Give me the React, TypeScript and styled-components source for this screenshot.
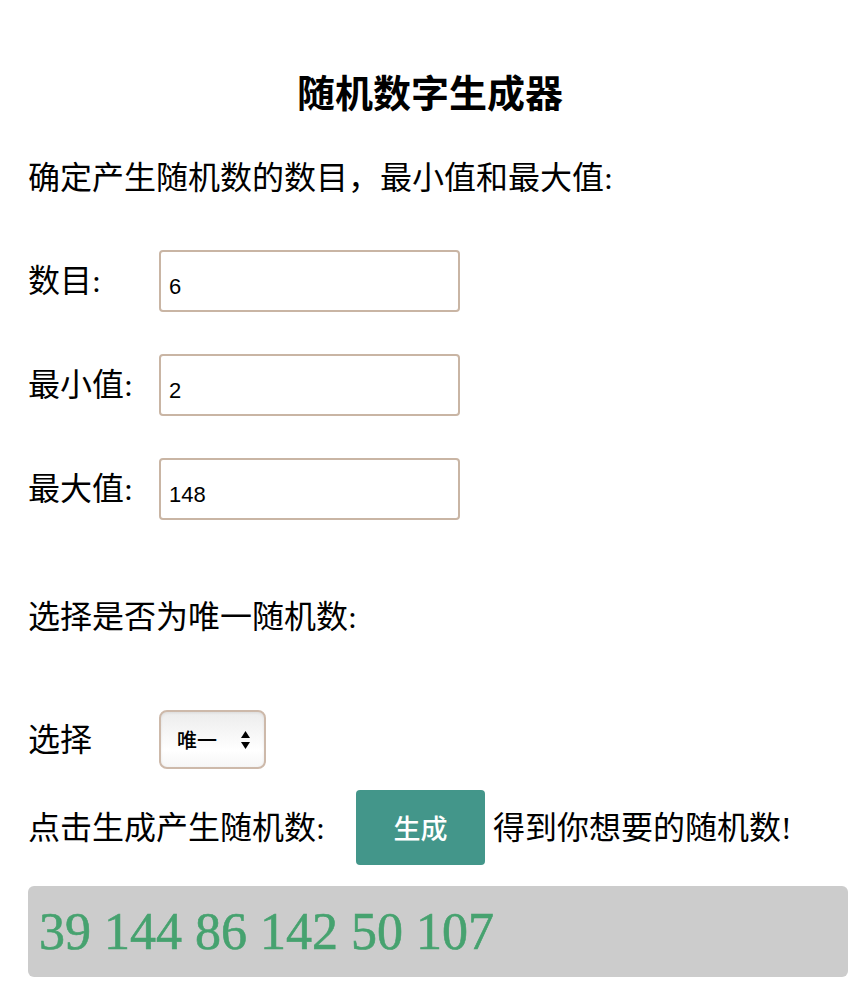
import React, { useState } from 'react'
import styled, { createGlobalStyle } from 'styled-components'

const GlobalStyle = createGlobalStyle`
  html, body {
    margin: 0;
    padding: 0;
    background: #ffffff;
  }
  body {
    font-family: "Liberation Serif", "Noto Sans CJK SC", serif;
    color: #000;
  }
`

const Page = styled.div`
  width: 860px;
  padding: 72px 0 0;
  box-sizing: border-box;
`

const Title = styled.h1`
  margin: 0;
  text-align: center;
  font-size: 38px;
  line-height: 44px;
  font-weight: bold;
`

const Content = styled.div`
  padding: 0 12px 0 28px;
`

const Text = styled.p<{ $top: number }>`
  margin: ${(p) => p.$top}px 0 0;
  font-size: 32px;
  line-height: 40px;
`

const Field = styled.div<{ $top: number }>`
  display: flex;
  align-items: center;
  margin-top: ${(p) => p.$top}px;
`

const Label = styled.span<{ $width?: number }>`
  width: ${(p) => (p.$width ? `${p.$width}px` : 'auto')};
  flex: none;
  font-size: 32px;
  line-height: 40px;
  white-space: nowrap;
`

const Input = styled.input`
  width: 301px;
  height: 62px;
  box-sizing: border-box;
  border: 2px solid #c9b5a4;
  border-radius: 4px;
  padding: 16px 8px 4px;
  font-family: "Liberation Sans", Arial, sans-serif;
  font-size: 22px;
  color: #000;
  outline: none;
  background: #fff;
`

const SelectBox = styled.div`
  position: relative;
  width: 107px;
  height: 59px;
  box-sizing: border-box;
  border: 2px solid #cdb9aa;
  border-radius: 8px;
  background: linear-gradient(#ececec, #ffffff 70%, #f6f6f6);
  box-shadow: inset 0 1px 3px rgba(0, 0, 0, 0.08);
`

const Select = styled.select`
  appearance: none;
  -webkit-appearance: none;
  width: 100%;
  height: 100%;
  border: none;
  background: transparent;
  padding: 0 0 0 16px;
  font-family: "Noto Sans CJK SC", sans-serif;
  font-size: 20px;
  font-weight: 500;
  color: #000;
  outline: none;
`

const Arrows = styled.svg`
  position: absolute;
  right: 14px;
  top: 50%;
  margin-top: -9px;
  pointer-events: none;
`

const Button = styled.button`
  width: 129px;
  height: 75px;
  margin-left: 31px;
  border: none;
  border-radius: 4px;
  background: #43968a;
  color: #fff;
  font-family: "Noto Sans CJK SC", sans-serif;
  font-size: 27px;
  font-weight: 500;
  cursor: pointer;
`

const After = styled.span`
  margin-left: 8px;
  font-size: 32px;
  line-height: 40px;
`

const Result = styled.div`
  margin-top: 21px;
  height: 91px;
  display: flex;
  align-items: center;
  padding-left: 11px;
  background: #cccccc;
  border-radius: 6px;
  overflow: hidden;
`

const Numbers = styled.span`
  color: #46a26f;
  font-family: "Liberation Serif", serif;
  font-size: 52px;
  line-height: 60px;
  white-space: nowrap;
  -webkit-text-stroke: 0.6px #46a26f;
`

const pick = (n: number, min: number, max: number) =>
  Array.from({ length: n }, () => Math.floor(Math.random() * (max - min + 1)) + min)

export default function App() {
  const [count, setCount] = useState('6')
  const [min, setMin] = useState('2')
  const [max, setMax] = useState('148')
  const [mode, setMode] = useState('unique')
  const [nums, setNums] = useState<number[]>([39, 144, 86, 142, 50, 107])

  return (
    <Page>
      <GlobalStyle />
      <Title>随机数字生成器</Title>
      <Content>
        <Text $top={42}>确定产生随机数的数目，最小值和最大值:</Text>

        <Field $top={52}>
          <Label $width={131}>数目:</Label>
          <Input value={count} onChange={(e) => setCount(e.target.value)} />
        </Field>
        <Field $top={42}>
          <Label $width={131}>最小值:</Label>
          <Input value={min} onChange={(e) => setMin(e.target.value)} />
        </Field>
        <Field $top={42}>
          <Label $width={131}>最大值:</Label>
          <Input value={max} onChange={(e) => setMax(e.target.value)} />
        </Field>

        <Text $top={77}>选择是否为唯一随机数:</Text>

        <Field $top={73}>
          <Label $width={131}>选择</Label>
          <SelectBox>
            <Select value={mode} onChange={(e) => setMode(e.target.value)}>
              <option value="unique">唯一</option>
              <option value="repeat">可重复</option>
            </Select>
            <Arrows width="9" height="18" viewBox="0 0 9 18">
              <path d="M4.5 0 L9 7 H0 Z" fill="#000" />
              <path d="M0 11 H9 L4.5 18 Z" fill="#000" />
            </Arrows>
          </SelectBox>
        </Field>

        <Field $top={21}>
          <Label>点击生成产生随机数:</Label>
          <Button onClick={() => setNums(pick(+count || 0, +min || 0, +max || 0))}>生成</Button>
          <After>得到你想要的随机数!</After>
        </Field>

        <Result>
          <Numbers>{nums.join(' ')}</Numbers>
        </Result>
      </Content>
    </Page>
  )
}
